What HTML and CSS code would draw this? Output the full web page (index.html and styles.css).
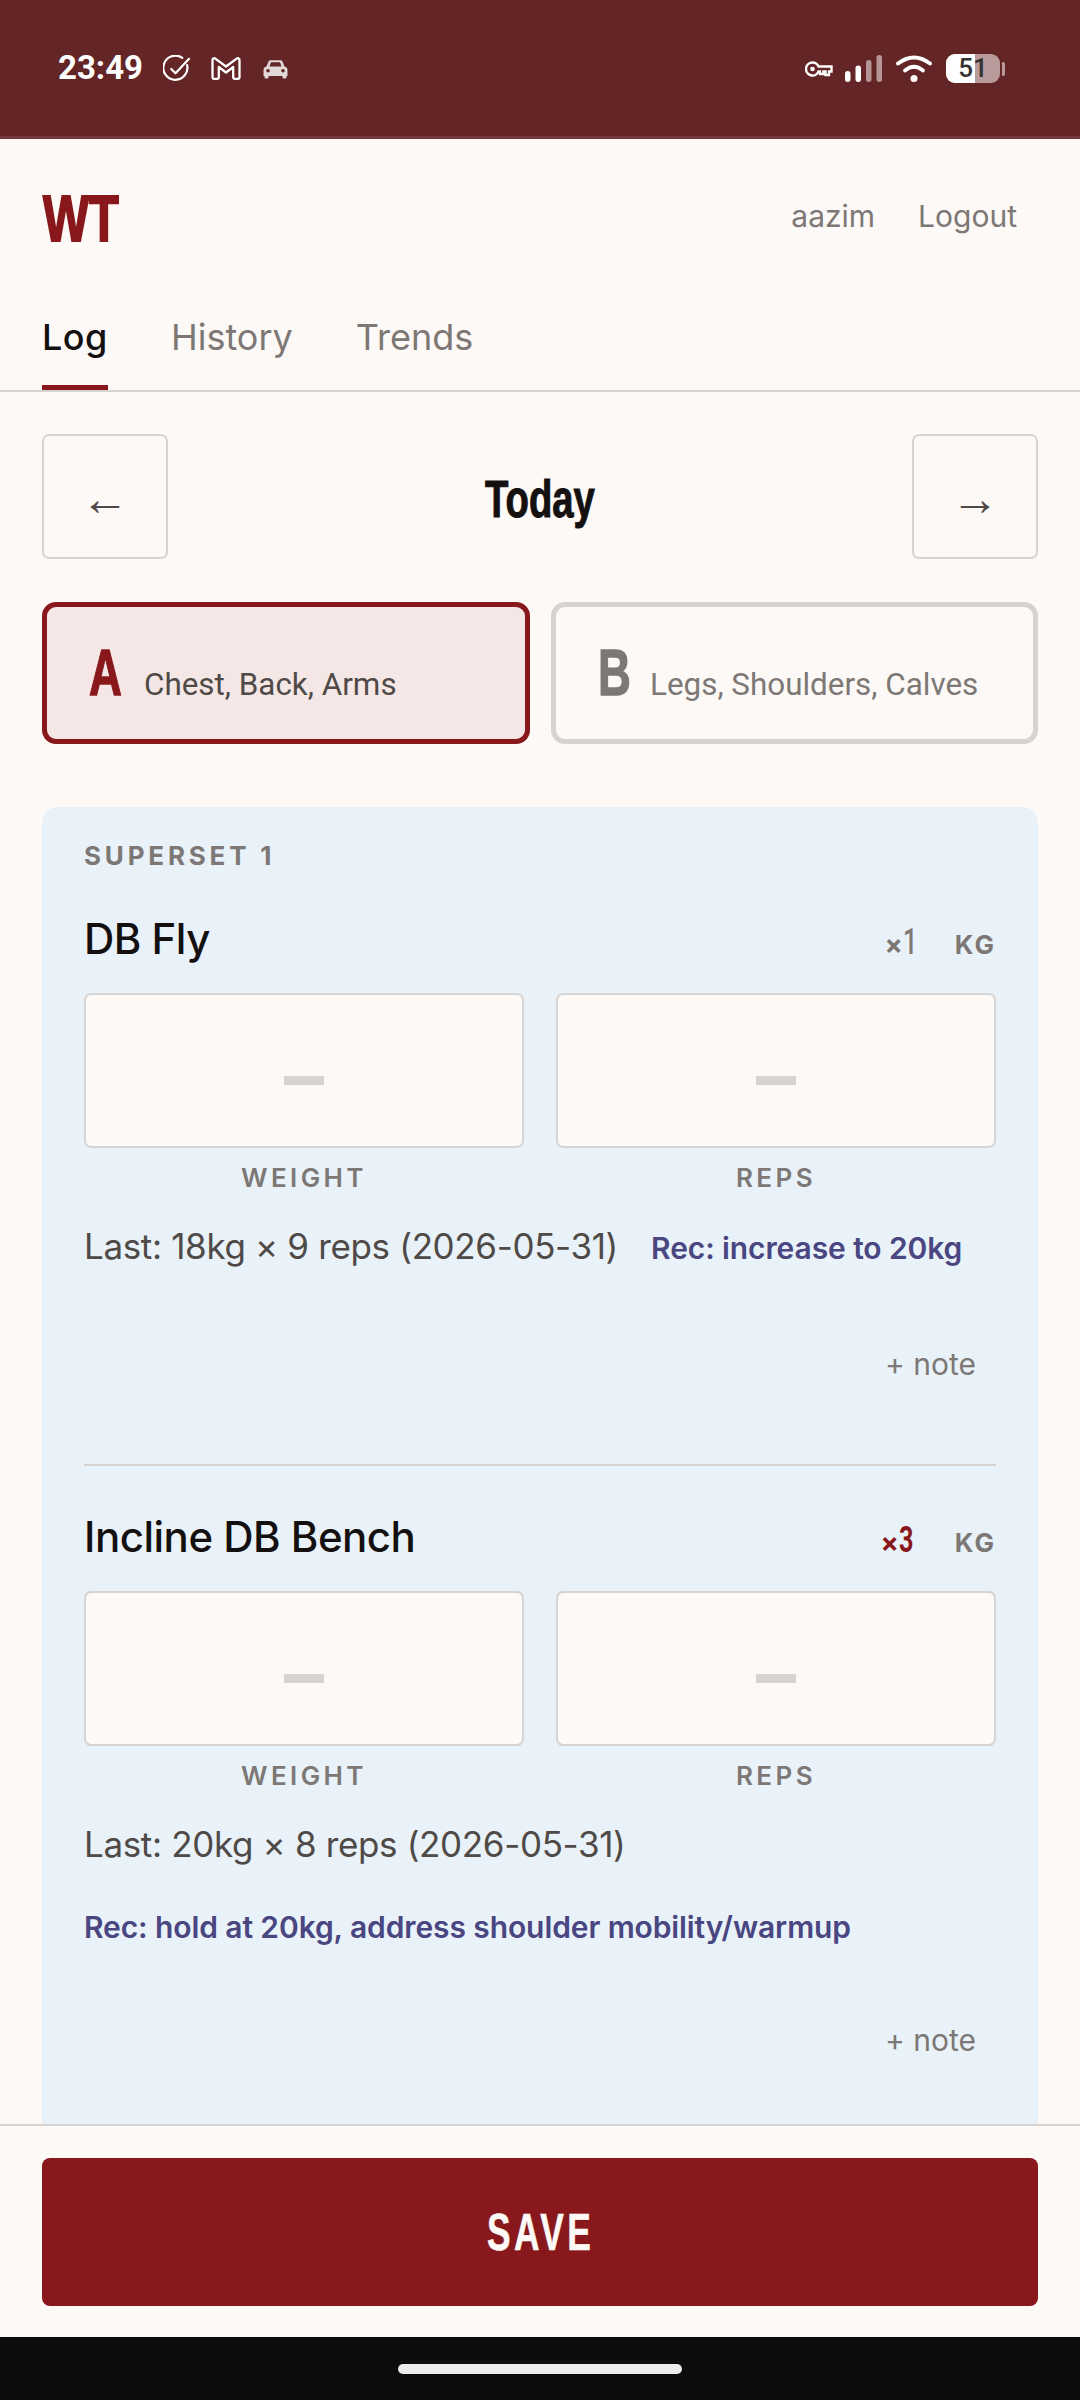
FILE: index.html
```html
<!DOCTYPE html>
<html lang="en">
<head>
<meta charset="utf-8">
<title>WT</title>
<link rel="stylesheet" href="styles.css">
</head>
<body>
<div class="phone">
  <div class="statusbar">
    <div class="status-left">
      <span class="clock">23:49</span>
      <svg class="ic-check" viewBox="0 0 28 28" width="28" height="27"><path d="M24.500 10.500A12.500 12.500 0 1 1 19.500 3" fill="none" stroke="#fff" stroke-width="2.300" stroke-linecap="round"/><path d="M8 14.500l4.500 4.500L26.500 4" fill="none" stroke="#fff" stroke-width="2.300" stroke-linecap="round" stroke-linejoin="round"/></svg>
      <svg class="ic-gmail" viewBox="0 0 30 23" width="30" height="23"><path d="M1.500 20.500V3.500Q1.500 1 4 1.300L15 9.500 26 1.300Q28.500 1 28.500 3.500V20.500Q28.500 21.800 27.200 21.800H23.500Q22.200 21.800 22.200 20.500V10L15 15.500 7.800 10V20.500Q7.800 21.800 6.500 21.800H2.800Q1.500 21.800 1.500 20.500Z" fill="none" stroke="#fff" stroke-width="2.300" stroke-linejoin="round"/></svg>
      <svg class="ic-car" viewBox="0 0 24 19" width="25" height="19"><path fill-rule="evenodd" d="M5 1.500Q5.600.2 7 .2h10q1.400 0 2 1.300L21 6.500q3 .8 3 3.500v5.500q0 .5-.5.5H23v1.200q0 1.300-1.300 1.300h-1.400Q19 18.500 19 17.200V16H5v1.200q0 1.300-1.300 1.300H2.300Q1 18.500 1 17.200V16H.5Q0 16 0 15.500V10q0-2.700 3-3.500ZM6 6.500h12L16.500 2.300h-9ZM4.500 9a1.800 1.800 0 1 0 0 3.600 1.800 1.800 0 0 0 0-3.600Zm15 0a1.800 1.800 0 1 0 0 3.600 1.800 1.800 0 0 0 0-3.600Z" fill="#e3d8d8"/></svg>
    </div>
    <div class="status-right">
      <svg class="ic-key" viewBox="0 0 28 16" width="28" height="16"><path d="M7.500 1.500a6.500 6.500 0 0 1 6 4H26.500v5H24v3.500h-3.500v-3.500h-2v2.500H15v-2.500h-1.500a6.500 6.500 0 1 1-6-9Z" fill="none" stroke="#fff" stroke-width="2.400"/><circle cx="7.500" cy="8" r="2.300" fill="#fff"/></svg>
      <svg class="ic-signal" viewBox="0 0 37 27" width="37" height="27"><rect x="0" y="16" width="5.500" height="11" rx="2.700" fill="#fff"/><rect x="10.500" y="10.500" width="5.500" height="16.500" rx="2.700" fill="#fff"/><rect x="21" y="5" width="5.500" height="22" rx="2.700" fill="#b59595"/><rect x="31.500" y="0" width="5.500" height="27" rx="2.700" fill="#b59595"/></svg>
      <svg class="ic-wifi" viewBox="0 0 36 27" width="36" height="27"><path d="M2 8.500Q18-3.500 34 8.500" fill="none" stroke="#fff" stroke-width="3.800" stroke-linecap="round"/><path d="M9 15.500Q18 8 27 15.500" fill="none" stroke="#fff" stroke-width="3.800" stroke-linecap="round"/><circle cx="18" cy="23.500" r="3.500" fill="#fff"/></svg>
      <div class="battery"><div class="batt-body"><span class="batt-fill"></span><span class="batt-num">51</span></div><span class="batt-tip"></span></div>
    </div>
  </div>

  <main class="app">
    <header class="topbar">
      <div class="logo"><span class="cond">WT</span></div>
      <nav class="userbar"><span>aazim</span><span>Logout</span></nav>
    </header>
    <nav class="tabs">
      <span class="tab active">Log</span>
      <span class="tab">History</span>
      <span class="tab">Trends</span>
    </nav>
    <div class="content">
      <div class="datenav">
        <button class="navbtn">←</button>
        <div class="today"><span class="cond">Today</span></div>
        <button class="navbtn">→</button>
      </div>
      <div class="daypick">
        <div class="dayopt selected"><span class="dayletter"><span class="cond">A</span></span><span class="daydesc">Chest, Back, Arms</span></div>
        <div class="dayopt"><span class="dayletter"><span class="cond">B</span></span><span class="daydesc">Legs, Shoulders, Calves</span></div>
      </div>
      <section class="card">
        <div class="cardlabel">SUPERSET 1</div>
        <article class="exercise">
          <div class="exhead">
            <h2 class="exname">DB Fly</h2>
            <div class="exmeta"><span class="setcount"><span class="times">×</span><span class="cond-num">1</span></span><span class="unit">KG</span></div>
          </div>
          <div class="fields">
            <div class="field"><div class="inputbox"><span class="dash"></span></div><div class="fieldlabel">WEIGHT</div></div>
            <div class="field"><div class="inputbox"><span class="dash"></span></div><div class="fieldlabel">REPS</div></div>
          </div>
          <div class="history"><span class="last">Last: 18kg × 9 reps (2026-05-31)</span><span class="rec">Rec: increase to 20kg</span></div>
          <div class="noterow"><span class="note">+ note</span></div>
        </article>
        <article class="exercise second">
          <div class="exhead">
            <h2 class="exname">Incline DB Bench</h2>
            <div class="exmeta"><span class="setcount hot"><span class="times">×</span><span class="cond-num">3</span></span><span class="unit">KG</span></div>
          </div>
          <div class="fields">
            <div class="field"><div class="inputbox"><span class="dash"></span></div><div class="fieldlabel">WEIGHT</div></div>
            <div class="field"><div class="inputbox"><span class="dash"></span></div><div class="fieldlabel">REPS</div></div>
          </div>
          <div class="history stacked"><span class="last">Last: 20kg × 8 reps (2026-05-31)</span><span class="rec">Rec: hold at 20kg, address shoulder mobility/warmup</span></div>
          <div class="noterow"><span class="note">+ note</span></div>
        </article>
      </section>
    </div>
  </main>

  <footer class="savebar"><button class="savebtn"><span class="savewrap"><span class="cond">SAVE</span></span></button></footer>
  <div class="navbar"><span class="homepill"></span></div>
</div>
</body>
</html>
```
FILE: styles.css
```css
* { box-sizing: border-box; }
html, body { margin: 0; padding: 0; }
body { width: 1080px; height: 2400px; overflow: hidden; background: #fcf9f6; font-family: "Inter", "Liberation Sans", sans-serif; color: #141010; }
.phone { width: 1080px; height: 2400px; display: flex; flex-direction: column; }

.statusbar { height: 139px; flex: none; background: #632525; border-bottom: 3px solid #733a3a; display: flex; justify-content: space-between; padding: 54px 75px 0 58px; }
.status-left, .status-right { display: flex; align-items: flex-start; }
.clock { font-family: "Roboto", sans-serif; font-weight: 700; font-size: 33px; line-height: 36px; color: #fff; margin-top: -4px; width: 82px; white-space: nowrap; }
.ic-check { margin: 1px 0 0 23px; }
.ic-gmail { margin: 3px 0 0 20px; }
.ic-car { margin: 6px 0 0 22px; }
.ic-key { margin: 7px 0 0 0; }
.ic-signal { margin: 1px 0 0 12px; }
.ic-wifi { margin: 1px 0 0 14px; }
.battery { display: flex; align-items: center; margin: 0 0 0 14px; height: 29px; }
.batt-body { position: relative; width: 54px; height: 29px; border-radius: 9px; background: #b89a9a; overflow: hidden; text-align: center; }
.batt-fill { position: absolute; left: 0; top: 0; bottom: 0; width: 29px; background: #fff; }
.batt-num { position: relative; font-family: "Roboto", sans-serif; font-weight: 500; font-size: 26px; line-height: 29px; color: #333; }
.batt-tip { width: 3px; height: 14px; background: #b89a9a; margin-left: 2px; border-radius: 0 2px 2px 0; }

.app { flex: 1; min-height: 0; overflow: hidden; display: flex; flex-direction: column; }
.cond { display: inline-block; font-family: "Liberation Sans", sans-serif; font-weight: 700; transform-origin: left center; white-space: nowrap; }
.topbar { height: 112px; flex: none; display: flex; justify-content: space-between; align-items: center; padding: 42px 63px 0 43px; }
.logo { color: #88181b; font-size: 65px; line-height: 64px; width: 75px; margin-top: 5px; }
.logo .cond { transform: scaleX(.75); -webkit-text-stroke: 2px #88181b; }
.userbar { display: flex; gap: 43px; font-size: 30px; line-height: 36px; color: #7d7875; }
.tabs { height: 141px; flex: none; display: flex; gap: 63px; padding: 0 42px; border-bottom: 2px solid #d6d3d0; align-items: flex-end; }
.tab { font-size: 36px; line-height: 40px; color: #7d7875; padding-bottom: 33px; }
.tab.active { color: #141010; font-weight: 500; border-bottom: 5px solid #88181b; padding-bottom: 28px; letter-spacing: .5px; }

.content { padding: 42px 42px 0; flex: 1; min-height: 0; }
.datenav { display: flex; justify-content: space-between; align-items: center; height: 125px; }
.navbtn { width: 126px; height: 125px; border: 2px solid #d6d3d0; border-radius: 7px; background: transparent; font-family: "Liberation Serif", serif; font-size: 48px; color: #4f4a47; padding: 4px 0 0; line-height: 1; }
.today { font-size: 51px; line-height: 56px; color: #141010; width: 110px; margin-top: 5px; }
.today .cond { transform: scaleX(.75); -webkit-text-stroke: 1px #141010; }
.daypick { display: grid; grid-template-columns: 488px 487px; gap: 21px; margin-top: 43px; }
.dayopt { height: 142px; border: 5px solid #d6d3d0; border-radius: 14px; display: flex; align-items: baseline; padding: 33px 0 0 42px; color: #7d7875; }
.dayopt.selected { border-color: #88181b; background: #f5e7e5; color: #4f4a47; }
.dayletter { font-size: 65px; line-height: 64px; width: 52px; }
.dayopt.selected .dayletter { width: 55px; }
.dayletter .cond { transform: scaleX(.7); -webkit-text-stroke: 1.4px currentColor; }
.dayopt.selected .dayletter { color: #88181b; }
.daydesc { font-family: "Roboto", sans-serif; font-size: 31.4px; }

.card { margin-top: 63px; background: #e9f2f8; border-radius: 16px; padding: 34px 42px 0; height: 1400px; }
.cardlabel { font-size: 26px; line-height: 30px; font-weight: 700; letter-spacing: 3.800px; color: #7d7875; }
.exhead { display: flex; justify-content: space-between; align-items: baseline; margin-top: 45px; height: 46px; }
.exname { margin: 0; font-size: 42px; line-height: 46px; font-weight: 500; letter-spacing: -.5px; color: #141010; }
.exmeta { display: flex; align-items: baseline; gap: 43px; color: #7d7875; padding-right: 0; }
.setcount { font-weight: 700; display: flex; align-items: baseline; }
.times { font-size: 27px; }
.cond-num { display: inline-block; width: 9px; font-family: "Roboto", sans-serif; font-weight: 500; font-size: 36px; transform: scaleX(.7); transform-origin: left center; }
.setcount.hot { color: #88181b; }
.setcount.hot .cond-num { font-weight: 700; width: 13px; }
.unit { font-size: 26px; font-weight: 700; letter-spacing: 2px; }
.fields { display: grid; grid-template-columns: 1fr 1fr; gap: 32px; margin-top: 31px; }
.field { text-align: center; }
.inputbox { height: 155px; border: 2px solid #d6d3d0; border-radius: 7px; background: #fcf9f6; display: flex; align-items: center; justify-content: center; }
.dash { width: 40px; height: 9px; background: #d6d3d0; margin-top: 19px; }
.fieldlabel { font-size: 26px; line-height: 30px; font-weight: 600; letter-spacing: 3.400px; color: #7d7875; margin-top: 15px; }
.history { display: flex; align-items: baseline; gap: 33px; margin-top: 31px; font-size: 35px; line-height: 44px; letter-spacing: -.35px; color: #4f4a47; white-space: nowrap; }
.rec { font-size: 30px; font-weight: 600; letter-spacing: -.1px; color: #494682; }
.history.stacked { flex-direction: column; gap: 39px; }
.noterow { display: flex; justify-content: flex-end; padding-right: 20px; margin-top: 74px; }
.note { font-size: 30px; line-height: 40px; color: #7d7875; }
.exercise.second { margin-top: 80px; border-top: 2px solid #d6d3d0; }
.second .exhead { margin-top: 48px; }
.second .noterow { margin-top: 71px; }

.savebar { flex: none; height: 213px; border-top: 2px solid #d6d3d0; background: #fcf9f6; padding: 32px 42px 0; }
.savebtn { width: 996px; height: 148px; background: #88181b; border: 0; border-radius: 8px; color: #fcf9f6; font-size: 52px; padding: 0 6px 0 0; display: flex; justify-content: center; align-items: center; }
.savewrap { display: block; width: 101px; text-align: left; }
.savewrap .cond { transform: scaleX(.68); letter-spacing: 5px; -webkit-text-stroke: .6px #fcf9f6; }
.navbar { flex: none; height: 63px; background: #0c0c0c; display: flex; justify-content: center; padding-top: 27px; }
.homepill { width: 284px; height: 10px; background: #ececec; border-radius: 5px; }
```
